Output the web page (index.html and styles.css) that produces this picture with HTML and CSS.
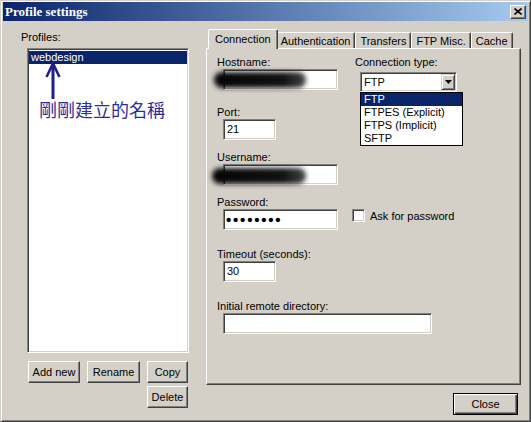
FILE: index.html
```html
<!DOCTYPE html>
<html>
<head>
<meta charset="utf-8">
<link rel="stylesheet" href="styles.css">
</head>
<body>
<div class="window">
  <div class="titlebar">
    <span class="title">Profile settings</span>
    <span class="tb-close"><svg width="8" height="7" viewBox="0 0 8 7"><path d="M0.5 0.5 L7.5 6.5 M7.5 0.5 L0.5 6.5" stroke="#000" stroke-width="1.6"/></svg></span>
  </div>
  <div class="body">
    <div class="left">
      <div class="lbl">Profiles:</div>
      <div class="listbox">
        <div class="item sel">webdesign</div>
        <svg class="note-arrow" width="18" height="40" viewBox="0 0 18 40"><path d="M9 3 L9 38" stroke="#1e1e8c" stroke-width="3"/><path d="M2.5 16 L9 2.5 L15.5 16" fill="none" stroke="#1e1e8c" stroke-width="2.6"/></svg>
        <div class="note">剛剛建立的名稱</div>
      </div>
      <div class="btn-grid">
        <div class="btn">Add new</div>
        <div class="btn">Rename</div>
        <div class="btn">Copy</div>
        <div class="btn btn-del">Delete</div>
      </div>
    </div>
    <div class="right">
      <div class="tabs">
        <div class="tab active">Connection</div>
        <div class="tab">Authentication</div>
        <div class="tab">Transfers</div>
        <div class="tab">FTP Misc.</div>
        <div class="tab">Cache</div>
      </div>
      <div class="panel">
        <div class="row">
          <div class="field col1">
            <div class="flabel">Hostname:</div>
            <div class="input w-long"><span class="blob blob-host"></span></div>
          </div>
          <div class="field col2">
            <div class="flabel">Connection type:</div>
            <div class="select">
              <span class="sel-text">FTP</span>
              <span class="sel-btn"><svg width="7" height="4" viewBox="0 0 7 4"><path d="M0 0 L7 0 L3.5 4 Z" fill="#000"/></svg></span>
              <div class="dropdown">
                <div class="opt on">FTP</div>
                <div class="opt">FTPES (Explicit)</div>
                <div class="opt">FTPS (Implicit)</div>
                <div class="opt">SFTP</div>
              </div>
            </div>
          </div>
        </div>
        <div class="row r-port">
          <div class="field col1">
            <div class="flabel">Port:</div>
            <div class="input w-short">21</div>
          </div>
        </div>
        <div class="row r-user">
          <div class="field col1">
            <div class="flabel">Username:</div>
            <div class="input w-long"><span class="blob blob-user"></span></div>
          </div>
        </div>
        <div class="row r-pass">
          <div class="field col1">
            <div class="flabel">Password:</div>
            <div class="input w-long pw">••••••••</div>
          </div>
          <div class="check-row">
            <span class="checkbox"></span>
            <span>Ask for password</span>
          </div>
        </div>
        <div class="row r-time">
          <div class="field col1">
            <div class="flabel">Timeout (seconds):</div>
            <div class="input w-short">30</div>
          </div>
        </div>
        <div class="row r-dir">
          <div class="field">
            <div class="flabel">Initial remote directory:</div>
            <div class="input w-dir"></div>
          </div>
        </div>
      </div>
      <div class="footer">
        <div class="btn btn-default">Close</div>
      </div>
    </div>
  </div>
</div>
</body>
</html>
```

FILE: styles.css
```css
html, body {
  margin: 0;
  padding: 0;
  background: #d4d0c8;
}
body {
  font-family: "Liberation Sans", Arial, sans-serif;
  font-size: 11px;
  color: #000;
}
.window {
  width: 531px;
  height: 422px;
  box-sizing: border-box;
  background: #d4d0c8;
  border: 1px solid;
  border-color: #d4d0c8 #404040 #404040 #d4d0c8;
  box-shadow: inset 1px 1px #fff, inset -1px -1px #808080;
  padding: 1px 2px 2px 2px;
  display: flex;
  flex-direction: column;
}
.titlebar {
  height: 19px;
  flex: none;
  background: linear-gradient(to right, #0a246a, #a6caf0);
  display: flex;
  align-items: center;
  justify-content: space-between;
  padding: 0 2px 0 2px;
  color: #fff;
}
.title {
  font-family: "Liberation Serif", "Times New Roman", serif;
  font-weight: bold;
  font-size: 13px;
  line-height: 15px;
}
.tb-close {
  width: 16px;
  height: 14px;
  box-sizing: border-box;
  background: #d4d0c8;
  border: 1px solid;
  border-color: #fff #404040 #404040 #fff;
  box-shadow: inset -1px -1px #808080;
  display: flex;
  align-items: center;
  justify-content: center;
}
.tb-close svg { display: block; }
.body {
  display: flex;
  flex: 1;
}
.left {
  width: 168px;
  margin-left: 18px;
  padding-top: 10px;
}
.lbl {
  line-height: 13px;
}
.listbox {
  position: relative;
  margin: 4px 0 0 6px;
  width: 162px;
  height: 305px;
  box-sizing: border-box;
  background: #fff;
  border: 1px solid;
  border-color: #808080 #fff #fff #808080;
  box-shadow: inset 1px 1px #404040, inset -1px -1px #d4d0c8;
  padding: 2px 1px 1px 1px;
}
.item {
  height: 13px;
  line-height: 13px;
  padding-left: 2px;
}
.item.sel {
  background: #0a246a;
  color: #fff;
}
.note-arrow {
  position: absolute;
  left: 16px;
  top: 12px;
}
.note {
  position: absolute;
  left: 11px;
  top: 51px;
  font-family: "Noto Sans CJK TC", "Noto Sans CJK SC", sans-serif;
  font-size: 18px;
  line-height: 18px;
  color: #2d2d9c;
  white-space: nowrap;
}
.btn-grid {
  display: grid;
  grid-template-columns: 52px 53px 41px;
  column-gap: 7px;
  row-gap: 3px;
  margin: 8px 0 0 7px;
}
.btn {
  height: 22px;
  box-sizing: border-box;
  border: 1px solid;
  border-color: #fff #404040 #404040 #fff;
  box-shadow: inset -1px -1px #808080;
  display: flex;
  align-items: center;
  justify-content: center;
  background: #d4d0c8;
}
.btn-del {
  grid-column: 3;
}
.right {
  width: 315px;
  margin-left: 17px;
  padding-top: 8px;
  display: flex;
  flex-direction: column;
}
.tabs {
  display: flex;
  align-items: flex-end;
  height: 19px;
  padding-left: 4px;
  position: relative;
  z-index: 1;
}
.tab {
  height: 16px;
  box-sizing: border-box;
  padding: 2px 4px 0 4px;
  line-height: 13px;
  border: 1px solid;
  border-bottom: none;
  border-color: #fff #404040 transparent #fff;
  box-shadow: inset -1px 0 #808080;
  border-radius: 2px 2px 0 0;
  background: #d4d0c8;
  white-space: nowrap;
}
.tab.active {
  position: relative;
  z-index: 2;
  height: 20px;
  margin: 0 -2px -1px -2px;
  padding: 3px 6px 0 6px;
}
.panel {
  height: 337px;
  box-sizing: border-box;
  border: 1px solid;
  border-color: #fff #404040 #404040 #fff;
  box-shadow: inset -1px -1px #808080;
  padding: 7px 0 0 10px;
  position: relative;
}
.row {
  display: flex;
}
.r-port { margin-top: 14px; }
.r-user, .r-pass { margin-top: 11px; }
.r-time, .r-dir { margin-top: 18px; }
.col1 {
  width: 138px;
  flex: none;
}
.flabel {
  line-height: 13px;
  white-space: nowrap;
}
.input {
  position: relative;
  margin-left: 6px;
  height: 21px;
  box-sizing: border-box;
  background: #fff;
  border: 1px solid;
  border-color: #808080 #fff #fff #808080;
  box-shadow: inset 1px 1px #404040, inset -1px -1px #d4d0c8;
  padding: 0 3px;
  line-height: 19px;
}
.w-long { width: 115px; }
.w-short { width: 53px; }
.w-dir { width: 209px; }
.pw {
  font-size: 15px;
  letter-spacing: 1.8px;
  font-weight: bold;
  padding-left: 2px;
}
.blob {
  position: absolute;
  height: 16px;
  border-radius: 8px;
  background: linear-gradient(to right, #050505 0%, #111 75%, #444 100%);
  filter: blur(2.5px);
}
.blob-host {
  left: -10px;
  top: 2px;
  width: 92px;
}
.blob-user {
  left: -12px;
  top: 3px;
  width: 94px;
}
.select {
  position: relative;
  margin: 3px 0 0 5px;
  width: 97px;
  height: 20px;
  box-sizing: border-box;
  background: #fff;
  border: 1px solid;
  border-color: #808080 #fff #fff #808080;
  box-shadow: inset 1px 1px #404040, inset -1px -1px #d4d0c8;
  display: flex;
  align-items: center;
  padding: 1px 1px 1px 3px;
}
.sel-text {
  flex: 1;
  line-height: 16px;
}
.sel-btn {
  width: 14px;
  height: 16px;
  box-sizing: border-box;
  background: #d4d0c8;
  border: 1px solid;
  border-color: #d4d0c8 #404040 #404040 #d4d0c8;
  box-shadow: inset 1px 1px #fff, inset -1px -1px #808080;
  display: flex;
  align-items: center;
  justify-content: center;
}
.sel-btn svg { display: block; }
.dropdown {
  position: absolute;
  left: -1px;
  top: 19px;
  width: 103px;
  box-sizing: border-box;
  background: #fff;
  border: 1px solid #000;
  z-index: 5;
}
.opt {
  height: 13px;
  line-height: 13px;
  padding-left: 3px;
  white-space: nowrap;
}
.opt.on {
  background: #0a246a;
  color: #fff;
}
.check-row {
  display: flex;
  align-items: center;
  margin: 13px 0 0 -3px;
  height: 13px;
  gap: 5px;
}
.checkbox {
  width: 13px;
  height: 13px;
  box-sizing: border-box;
  background: #fff;
  border: 1px solid;
  border-color: #808080 #fff #fff #808080;
  box-shadow: inset 1px 1px #404040, inset -1px -1px #d4d0c8;
}
.footer {
  display: flex;
  justify-content: flex-end;
  margin-top: 8px;
  padding-right: 3px;
}
.btn-default {
  width: 65px;
  border: 1px solid #000;
  box-shadow: inset 1px 1px #fff, inset -1px -1px #404040, inset -2px -2px #808080;
}
```
